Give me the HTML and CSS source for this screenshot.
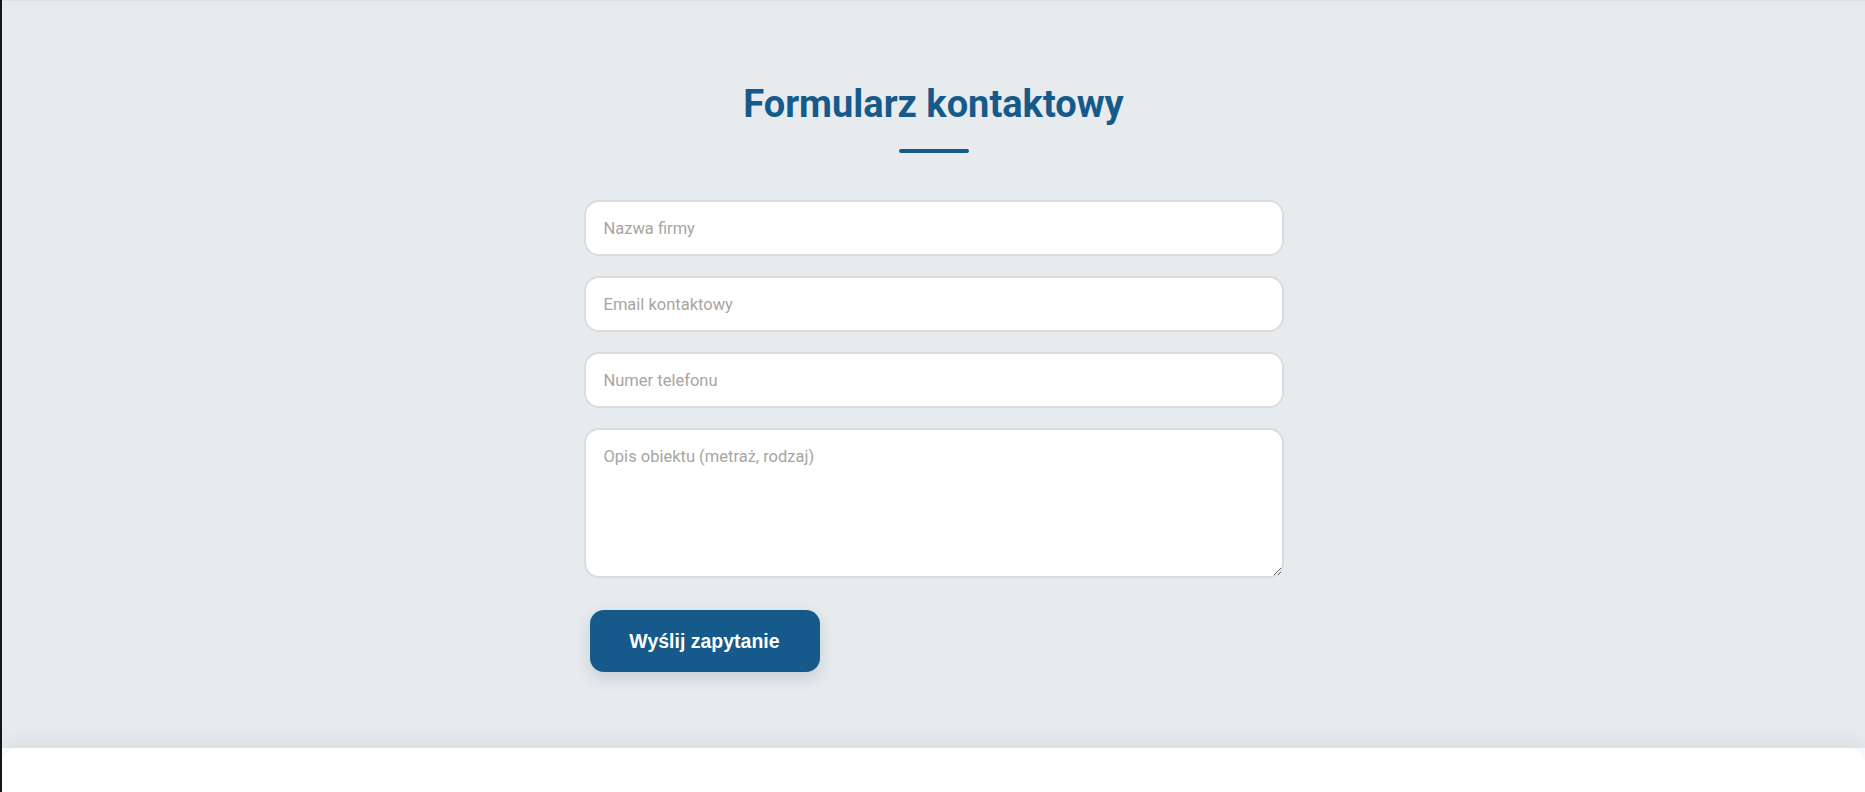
FILE: index.html
```html
<!DOCTYPE html>
<html lang="pl">
<head>
  <meta charset="UTF-8" />
  <meta name="viewport" content="width=device-width, initial-scale=1.0"/>
  <title>Formularz kontaktowy</title>
  <link rel="stylesheet" href="styles.css">
</head>
<body>
  <section class="contact">
    <h2 class="contact-title">Formularz kontaktowy</h2>
    <div class="title-line"></div>

    <form class="contact-form">
      <input type="text" placeholder="Nazwa firmy" />
      <input type="email" placeholder="Email kontaktowy" />
      <input type="tel" placeholder="Numer telefonu" />
      <textarea placeholder="Opis obiektu (metraż, rodzaj)"></textarea>
      <button type="submit">Wyślij zapytanie</button>
    </form>
  </section>

  <footer class="next-section"></footer>
</body>
</html>
```

FILE: styles.css
```css
body {
  font-family: 'Roboto', sans-serif;
  background: #ffffff;
  margin: 0;
  padding: 0;
  border-left: 2px solid #15151d;
  overflow: hidden;
}

.contact {
  background: #e7ebee;
  border-top: 1px solid #dde1e4;
  height: 748px;
  box-sizing: border-box;
  padding-top: 81px;
  display: flex;
  flex-direction: column;
  align-items: center;
}

.contact-title {
  margin: 0;
  color: #155a8a;
  font-size: 38px;
  font-weight: 700;
  line-height: 44px;
}

.title-line {
  width: 70px;
  height: 4px;
  border-radius: 2px;
  background: #155a8a;
  margin-top: 23px;
}

.contact-form {
  width: 700px;
  margin-top: 47px;
  display: flex;
  flex-direction: column;
  gap: 20px;
}

.contact-form input,
.contact-form textarea {
  box-sizing: border-box;
  width: 100%;
  height: 56px;
  padding: 1px 18px 0;
  font-family: 'Roboto', sans-serif;
  font-size: 16.5px;
  color: #333;
  background: #fff;
  border: 2px solid #dcdcdc;
  border-radius: 15px;
  outline: none;
}

.contact-form textarea {
  height: 150px;
  padding: 17px 18px;
  resize: vertical;
}

.contact-form ::placeholder {
  color: #a9a5a0;
}

.contact-form button {
  align-self: flex-start;
  margin: 12px 0 0 6px;
  width: 230px;
  height: 62px;
  background: #155a8a;
  color: #fff;
  font-family: 'Liberation Sans', Arial, sans-serif;
  font-size: 19.5px;
  font-weight: 700;
  border: none;
  border-radius: 14px;
  box-shadow: 0 6px 16px rgba(21, 40, 70, 0.15);
  cursor: pointer;
}

.next-section {
  height: 60px;
  background: #fff;
  border-radius: 16px 16px 0 0;
  box-shadow: 0 -8px 16px rgba(30, 50, 80, 0.06);
  position: relative;
}
```
